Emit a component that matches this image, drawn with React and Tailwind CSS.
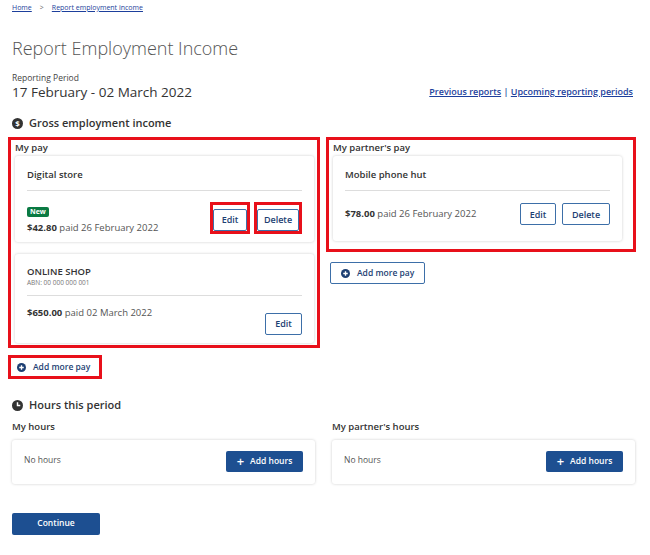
const font = { fontFamily: '"Open Sans", "Noto Sans", sans-serif' };

function Btn({ children, red, w }) {
  const b = <button className={`h-[22px] ${w} border border-[#3d6fa8] rounded-[2px] bg-white text-[9px] font-semibold text-[#1d3f73]`}>{children}</button>;
  return red ? <div className="border-[3px] border-[#e8101a] p-0">{b}</div> : b;
}

function Dollar() {
  return <svg width="11" height="11" viewBox="0 0 12 12"><circle cx="6" cy="6" r="6" fill="#333" /><text x="6" y="9" textAnchor="middle" fontSize="8.5" fontWeight="700" fill="#fff" fontFamily="Open Sans">$</text></svg>;
}
function Clock() {
  return <svg width="11" height="11" viewBox="0 0 12 12"><circle cx="6" cy="6" r="6" fill="#333" /><path d="M6 2.5V6h3" stroke="#fff" strokeWidth="1.6" fill="none" /></svg>;
}
function PlusCircle() {
  return <svg width="9" height="9" viewBox="0 0 10 10"><circle cx="5" cy="5" r="5" fill="#1d3f73" /><path d="M5 2.5v5M2.5 5h5" stroke="#fff" strokeWidth="1.5" /></svg>;
}

function Card({ children }) {
  return <div className="bg-white rounded-[3px] shadow-[0_0_3px_rgba(0,0,0,0.2)] px-[12px]">{children}</div>;
}

export default function App() {
  return (
    <div style={font} className="w-[650px] h-[555px] bg-white text-[#333] pl-[12px] pr-[14px] overflow-hidden">
      <div className="pt-[3px] text-[7px] text-[#1d3f9c] flex gap-[8px]">
        <span className="underline">Home</span><span className="text-[#666]">&gt;</span><span className="underline">Report employment income</span>
      </div>
      <h1 className="mt-[22px] text-[18px] font-light text-[#555] leading-[24px]">Report Employment Income</h1>
      <div className="mt-[12px] flex items-end justify-between">
        <div>
          <div className="text-[8.5px] text-[#444]">Reporting Period</div>
          <div className="text-[13.5px] leading-[17px] text-[#333]">17 February - 02 March 2022</div>
        </div>
        <div className="text-[9px] font-semibold text-[#1d3f9c] mb-[3px] mr-[3px]"><span className="underline">Previous reports</span> | <span className="underline">Upcoming reporting periods</span></div>
      </div>
      <div className="mt-[14px] flex items-center gap-[6px] text-[11px] font-semibold text-[#333]"><Dollar />Gross employment income</div>

      <div className="mt-[5px] -ml-[4px] flex gap-[6px] items-start">
        <div className="w-[312px] border-[3px] border-[#e8101a] pl-[4px] pr-[3px] pb-[2px]">
          <div className="text-[9.5px] font-semibold py-[1px]">My pay</div>
          <Card>
            <div className="pt-[12px] pb-[8px] text-[9.5px] font-semibold border-b border-[#ddd]">Digital store</div>
            <div className="flex justify-between items-center pt-[5px] pb-[6px]">
              <div>
                <span className="inline-block bg-[#0a7a43] text-white text-[7px] font-bold px-[3px] rounded-[2px] leading-[10px]">New</span>
                <div className="text-[9.5px] mt-[1px]"><b>$42.80</b> <span className="text-[#555]">paid 26 February 2022</span></div>
              </div>
              <div className="flex gap-[4px] mt-[4px]"><Btn red w="w-[34px]">Edit</Btn><Btn red w="w-[42px]">Delete</Btn></div>
            </div>
          </Card>
          <div className="h-[12px]" />
          <Card>
            <div className="pt-[12px] pb-[8px] border-b border-[#ddd]">
              <div className="text-[9.5px] font-semibold leading-[12px]">ONLINE SHOP</div>
              <div className="text-[6.5px] text-[#777]">ABN: 00 000 000 001</div>
            </div>
            <div className="flex justify-between items-start pt-[10px] pb-[8px]">
              <div className="text-[9.5px]"><b>$650.00</b> <span className="text-[#555]">paid 02 March 2022</span></div>
              <div className="mt-[3px]"><Btn w="w-[37px]">Edit</Btn></div>
            </div>
          </Card>
        </div>
        <div className="w-[310px]">
          <div className="border-[3px] border-[#e8101a] pl-[4px] pr-[11px] pb-[8px]">
            <div className="text-[9.5px] font-semibold py-[1px]">My partner's pay</div>
            <Card>
              <div className="pt-[12px] pb-[8px] text-[9.5px] font-semibold border-b border-[#ddd]">Mobile phone hut</div>
              <div className="flex justify-between items-center pt-[6px] pb-[16px]">
                <div className="text-[9.5px] mt-[6px]"><b>$78.00</b> <span className="text-[#555]">paid 26 February 2022</span></div>
                <div className="flex gap-[6px] mt-[6px]"><Btn w="w-[36px]">Edit</Btn><Btn w="w-[48px]">Delete</Btn></div>
              </div>
            </Card>
          </div>
          <button className="mt-[10px] ml-[4px] h-[22px] px-[10px] border border-[#3d6fa8] rounded-[2px] flex items-center gap-[7px] text-[8.5px] font-semibold text-[#1d3f73]"><PlusCircle />Add more pay</button>
        </div>
      </div>

      <div className="mt-[7px] -ml-[4px] inline-flex border-[3px] border-[#e8101a] h-[24px] items-center px-[6px] gap-[7px] text-[8.5px] font-semibold text-[#1d3f73] w-[94px]"><PlusCircle />Add more pay</div>

      <div className="mt-[18px] flex items-center gap-[6px] text-[11px] font-semibold"><Clock />Hours this period</div>
      <div className="mt-[6px] flex gap-[17px]">
        {["My hours", "My partner's hours"].map((t) => (
          <div key={t} className="w-[303px]">
            <div className="text-[9.5px] font-semibold mb-[6px]">{t}</div>
            <Card>
              <div className="h-[44px] flex items-center justify-between">
                <span className="text-[8.5px] text-[#555] -mt-[2px]">No hours</span>
                <button className="h-[21px] w-[77px] bg-[#1d4f91] rounded-[2px] text-white text-[8.5px] font-semibold flex items-center justify-center gap-[6px]"><span className="text-[13px] leading-none -mt-[1px]">+</span>Add hours</button>
              </div>
            </Card>
          </div>
        ))}
      </div>
      <button className="mt-[29px] h-[22px] w-[88px] bg-[#1d4f91] rounded-[2px] text-white text-[8.5px] font-semibold">Continue</button>
    </div>
  );
}
